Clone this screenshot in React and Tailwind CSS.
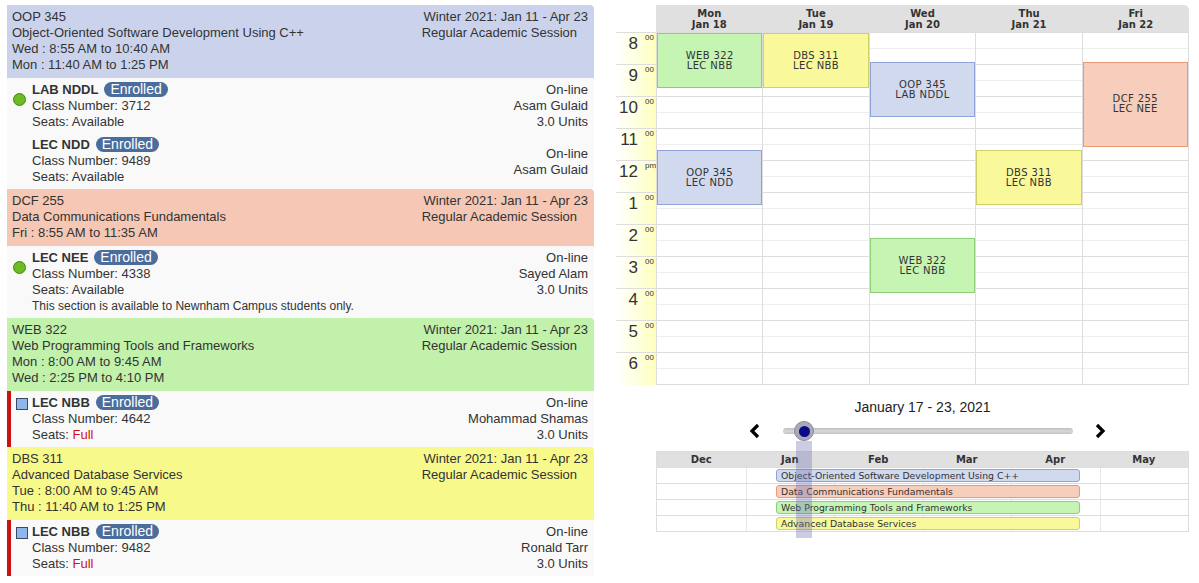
import React from "react";

const HEADERS = {
  lav: "bg-[#cbd3ec]",
  sal: "bg-[#f5c7b4]",
  grn: "bg-[#c2f1ac]",
  yel: "bg-[#f8f98b]",
};

const EVENT_STYLES = {
  lav: "bg-[#d1d9ee] border-[#8fa3d8]",
  sal: "bg-[#f7cdbb] border-[#eb9876]",
  grn: "bg-[#c6f4b3] border-[#8dcf76]",
  yel: "bg-[#f9f99c] border-[#d0d06a]",
};

const COURSES = [
  {
    color: "lav",
    code: "OOP 345",
    title: "Object-Oriented Software Development Using C++",
    times: ["Wed : 8:55 AM to 10:40 AM", "Mon : 11:40 AM to 1:25 PM"],
    icon: "dot",
    full: false,
    sections: [
      { name: "LAB NDDL", num: "3712" },
      { name: "LEC NDD", num: "9489" },
    ],
    right: ["On-line", "Asam Gulaid", "3.0 Units", "", "On-line", "Asam Gulaid"],
  },
  {
    color: "sal",
    code: "DCF 255",
    title: "Data Communications Fundamentals",
    times: ["Fri : 8:55 AM to 11:35 AM"],
    icon: "dot",
    full: false,
    sections: [
      {
        name: "LEC NEE",
        num: "4338",
        note: "This section is available to Newnham Campus students only.",
      },
    ],
    right: ["On-line", "Sayed Alam", "3.0 Units"],
  },
  {
    color: "grn",
    code: "WEB 322",
    title: "Web Programming Tools and Frameworks",
    times: ["Mon : 8:00 AM to 9:45 AM", "Wed : 2:25 PM to 4:10 PM"],
    icon: "square",
    full: true,
    sections: [{ name: "LEC NBB", num: "4642" }],
    right: ["On-line", "Mohammad Shamas", "3.0 Units"],
  },
  {
    color: "yel",
    code: "DBS 311",
    title: "Advanced Database Services",
    times: ["Tue : 8:00 AM to 9:45 AM", "Thu : 11:40 AM to 1:25 PM"],
    icon: "square",
    full: true,
    sections: [{ name: "LEC NBB", num: "9482" }],
    right: ["On-line", "Ronald Tarr", "3.0 Units"],
  },
];

const DAYS = [
  ["Mon", "Jan 18"],
  ["Tue", "Jan 19"],
  ["Wed", "Jan 20"],
  ["Thu", "Jan 21"],
  ["Fri", "Jan 22"],
];

// start / end in hours from 8:00
const EVENTS = [
  { day: 0, start: 0, end: 1.75, color: "grn", a: "WEB 322", b: "LEC NBB" },
  { day: 1, start: 0, end: 1.75, color: "yel", a: "DBS 311", b: "LEC NBB" },
  { day: 2, start: 55 / 60, end: 2 + 40 / 60, color: "lav", a: "OOP 345", b: "LAB NDDL" },
  { day: 4, start: 55 / 60, end: 3 + 35 / 60, color: "sal", a: "DCF 255", b: "LEC NEE" },
  { day: 0, start: 3 + 40 / 60, end: 5 + 25 / 60, color: "lav", a: "OOP 345", b: "LEC NDD" },
  { day: 3, start: 3 + 40 / 60, end: 5 + 25 / 60, color: "yel", a: "DBS 311", b: "LEC NBB" },
  { day: 2, start: 6 + 25 / 60, end: 8 + 10 / 60, color: "grn", a: "WEB 322", b: "LEC NBB" },
];

const HOURS = [
  ["8", "00"],
  ["9", "00"],
  ["10", "00"],
  ["11", "00"],
  ["12", "pm"],
  ["1", "00"],
  ["2", "00"],
  ["3", "00"],
  ["4", "00"],
  ["5", "00"],
  ["6", "00"],
];

const MONTHS = ["Dec", "Jan", "Feb", "Mar", "Apr", "May"];

function Badge() {
  return (
    <span className="ml-[6px] inline-block rounded-full bg-[#4b6d9c] px-[6px] text-[14px] leading-[15px] font-normal text-white">
      Enrolled
    </span>
  );
}

function CourseBlock({ c }) {
  return (
    <div>
      <div className={`${HEADERS[c.color]} flex justify-between rounded-tr-[4px] pt-[4px] pb-[5px] pl-[5px] pr-[6px]`}>
        <div>
          <div>{c.code}</div>
          <div>{c.title}</div>
          {c.times.map((t) => (
            <div key={t}>{t}</div>
          ))}
        </div>
        <div className="flex flex-col items-end">
          <div>Winter 2021: Jan 11 - Apr 23</div>
          <div className="mr-[11px]">Regular Academic Session</div>
        </div>
      </div>
      <div className="flex bg-[#f9f9f9]">
        <div className={`w-[4px] shrink-0 ${c.full ? "bg-[#cc1111]" : ""}`} />
        <div className="w-[21px] shrink-0">
          {c.icon === "dot" ? (
            <div className="mt-[15px] ml-[2px] h-[13px] w-[13px] rounded-full border border-[#3f8a12] bg-[#6cbb22]" />
          ) : (
            <div className="mt-[7px] ml-[5px] h-[12px] w-[12px] border border-[#3a4a66] bg-[#8fb5ea]" />
          )}
        </div>
        <div className="flex-1 py-[4px]">
          {c.sections.map((s, i) => (
            <div key={s.num} className={i > 0 ? "mt-[7px]" : ""}>
              <div className="font-bold">
                {s.name}
                <Badge />
              </div>
              <div>Class Number: {s.num}</div>
              <div>
                Seats:{" "}
                {c.full ? <span className="text-[#d0101a]">Full</span> : "Available"}
              </div>
              {s.note && <div className="text-[12px]">{s.note}</div>}
            </div>
          ))}
        </div>
        <div className="py-[4px] pr-[6px] text-right">
          {c.right.map((r, i) => (
            <div key={i} className="h-[16px]">
              {r}
            </div>
          ))}
        </div>
      </div>
    </div>
  );
}

function Chevron({ dir }) {
  return (
    <svg width="14" height="16" viewBox="0 0 14 16">
      <path
        d={dir === "left" ? "M10 2 L4 8 L10 14" : "M4 2 L10 8 L4 14"}
        fill="none"
        stroke="#000"
        strokeWidth="3.2"
      />
    </svg>
  );
}

function Calendar() {
  return (
    <div className="ml-[22px] font-['DejaVu_Sans',sans-serif] text-[#333]">
      <div className="flex">
        <div className="w-[40px]" />
        <div className="grid h-[27px] w-[533px] grid-cols-5 rounded-tr-[5px] bg-[#e0e0e0]">
          {DAYS.map(([d, dt]) => (
            <div key={d} className="flex flex-col items-center justify-center text-[10px] leading-[11px] font-bold">
              <div>{d}</div>
              <div>{dt}</div>
            </div>
          ))}
        </div>
      </div>
      <div className="flex">
        <div className="w-[40px] bg-gradient-to-r from-white to-[#ffffbe] font-['Liberation_Sans',sans-serif]">
          {HOURS.map(([h, s]) => (
            <div key={h} className="flex h-[32px] border-t border-[#dddddd]">
              <div className="flex-1 pt-[2px] text-right text-[17px] leading-[17px] text-[#333]">{h}</div>
              <div className="w-[18px] pl-[7px] text-[8px] leading-[8px] pt-[1px]">{s}</div>
            </div>
          ))}
        </div>
        <div className="relative grid w-[533px] grid-cols-5 border-r border-b border-[#dddddd]">
          {DAYS.map(([d], di) => (
            <div key={d} className="relative border-l border-[#dddddd]">
              {HOURS.map(([h]) => (
                <div key={h} className="h-[32px] border-t border-[#dddddd]">
                  <div className="h-[16px] border-b border-[#eeeeee]" />
                </div>
              ))}
              {EVENTS.filter((e) => e.day === di).map((e) => (
                <div
                  key={e.a + e.start}
                  className={`absolute right-0 left-0 flex flex-col items-center justify-center border text-[10px] leading-[10px] tracking-[0.4px] ${EVENT_STYLES[e.color]}`}
                  style={{ top: e.start * 32 + 1, height: (e.end - e.start) * 32 - 1 }}
                >
                  <div>{e.a}</div>
                  <div>{e.b}</div>
                </div>
              ))}
            </div>
          ))}
        </div>
      </div>
      <div className="flex">
        <div className="w-[40px]" />
        <div className="relative w-[533px]">
          <div className="mt-[14px] text-center font-['Liberation_Sans',sans-serif] text-[14px] leading-[16px] text-[#222]">
            January 17 - 23, 2021
          </div>
          <div className="relative mt-[6px] flex h-[20px] items-center">
            <div className="ml-[92px]">
              <Chevron dir="left" />
            </div>
            <div className="relative ml-[21px] h-[6px] w-[290px] rounded-full bg-gradient-to-b from-[#bdbdbd] via-[#d8d8d8] to-[#c4c4c4]" />
            <div className="ml-[20px]">
              <Chevron dir="right" />
            </div>
          </div>
          <div className="relative mt-[10px] border border-[#dddddd] font-['DejaVu_Sans',sans-serif]">
            <div className="grid h-[15px] grid-cols-6 bg-[#e0e0e0]">
              {MONTHS.map((m) => (
                <div key={m} className="text-center text-[10px] leading-[15px] font-bold">
                  {m}
                </div>
              ))}
            </div>
            {COURSES.map((c) => (
              <div key={c.code} className="grid h-[16px] grid-cols-6 border-t border-[#dddddd]">
                {MONTHS.map((m, i) => (
                  <div key={m} className={i > 0 ? "border-l border-[#e6e6e6]" : ""} />
                ))}
              </div>
            ))}
            {COURSES.map((c, i) => (
              <div
                key={c.code}
                className={`absolute left-[119px] flex h-[13px] w-[304px] items-center rounded-[3px] border pl-[4px] text-[9.3px] text-[#333] ${EVENT_STYLES[c.color]}`}
                style={{ top: 17 + i * 16 }}
              >
                {c.title}
              </div>
            ))}
          </div>
          {/* slider handle + week band */}
          <div className="absolute top-[56px] left-[140px] h-[97px] w-[16px] bg-[#6d6db4]/35" />
          <div className="absolute top-[36px] left-[138px] flex h-[20px] w-[20px] items-center justify-center rounded-full border border-[#8a8aa0] bg-[#a9a9b8]">
            <div className="h-[11px] w-[11px] rounded-full bg-[#0a0a86]" />
          </div>
        </div>
      </div>
    </div>
  );
}

export default function App() {
  return (
    <div className="flex h-[583px] w-[1199px] bg-white pt-[5px] pl-[7px]">
      <div className="w-[587px] font-['Liberation_Sans',Arial,sans-serif] text-[13px] leading-[16px] text-[#333]">
        {COURSES.map((c) => (
          <CourseBlock key={c.code} c={c} />
        ))}
      </div>
      <Calendar />
    </div>
  );
}
